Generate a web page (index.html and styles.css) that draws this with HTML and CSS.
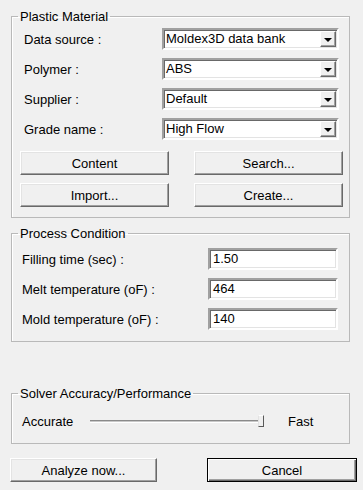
FILE: index.html
```html
<!DOCTYPE html>
<html lang="en">
<head>
    <meta charset="UTF-8">
    <title>Analysis Setup</title>
    <link rel="stylesheet" href="styles.css">
</head>
<body>

    <!-- Plastic material -->
    <fieldset class="group material">
        <legend>Plastic Material</legend>
        <div class="combo-rows">
            <span class="label">Data source :</span>
            <div class="combo"><span class="combo-text">Moldex3D data bank</span><span class="combo-btn"><span class="arrow"></span></span></div>
            <span class="label">Polymer :</span>
            <div class="combo"><span class="combo-text">ABS</span><span class="combo-btn"><span class="arrow"></span></span></div>
            <span class="label">Supplier :</span>
            <div class="combo"><span class="combo-text">Default</span><span class="combo-btn"><span class="arrow"></span></span></div>
            <span class="label">Grade name :</span>
            <div class="combo"><span class="combo-text">High Flow</span><span class="combo-btn"><span class="arrow"></span></span></div>
        </div>
        <div class="button-grid">
            <button class="win-btn">Content</button>
            <button class="win-btn">Search...</button>
            <button class="win-btn">Import...</button>
            <button class="win-btn">Create...</button>
        </div>
    </fieldset>

    <!-- Process condition -->
    <fieldset class="group process">
        <legend>Process Condition</legend>
        <div class="field-rows">
            <span class="label">Filling time (sec) :</span>
            <div class="textbox">1.50</div>
            <span class="label">Melt temperature (oF) :</span>
            <div class="textbox">464</div>
            <span class="label">Mold temperature (oF) :</span>
            <div class="textbox">140</div>
        </div>
    </fieldset>

    <!-- Solver -->
    <fieldset class="group solver">
        <legend>Solver Accuracy/Performance</legend>
        <div class="slider-row">
            <span class="slider-label">Accurate</span>
            <div class="slider">
                <div class="track"></div>
                <div class="thumb"></div>
            </div>
            <span class="slider-fast">Fast</span>
        </div>
    </fieldset>

    <div class="actions">
        <button class="win-btn analyze">Analyze now...</button>
        <button class="win-btn default">Cancel</button>
    </div>

</body>
</html>
```

FILE: styles.css
```css
body {
    margin: 0;
    padding: 9px 0 0 0;
    width: 363px;
    height: 490px;
    background-color: #f0f0f0;
    font-family: "Liberation Sans", Arial, sans-serif;
    font-size: 13px;
    color: #000;
    overflow: hidden;
}

/* Group boxes */
.group {
    margin: 0 13px 0 11px;
    padding: 0 0 10px 6px;
    border: 1px solid #b9b9b9;
    box-shadow: inset 1px 1px #fff;
    min-width: 0;
}

.group legend {
    padding: 0 2px;
    line-height: 15px;
}

.process {
    margin-top: 8px;
    padding-bottom: 11px;
}

.solver {
    margin-top: 44px;
    padding-bottom: 11px;
}

.label {
    display: flex;
    align-items: center;
    white-space: nowrap;
}

/* Combo boxes */
.combo-rows {
    display: grid;
    grid-template-columns: 1fr 177px;
    row-gap: 8px;
    margin-top: 4px;
    padding: 0 10px 0 6px;
}

.combo {
    display: flex;
    height: 22px;
    box-sizing: border-box;
    background: #fff;
    border: 2px solid;
    border-color: #a0a0a0 #fff #fff #a0a0a0;
    box-shadow: inset 1px 1px #696969, inset -1px -1px #e3e3e3;
    padding: 1px;
}

.combo-text {
    flex: 1;
    padding-left: 1px;
    line-height: 16px;
}

.combo-btn {
    width: 16px;
    height: 16px;
    box-sizing: border-box;
    background: #f0f0f0;
    border: 1px solid;
    border-color: #fff #696969 #696969 #fff;
    box-shadow: inset -1px -1px #a0a0a0;
    display: flex;
    align-items: center;
    justify-content: center;
}

.arrow {
    width: 0;
    height: 0;
    border-left: 4px solid transparent;
    border-right: 4px solid transparent;
    border-top: 4px solid #000;
    margin-top: 1px;
}

/* Buttons */
.button-grid {
    display: grid;
    grid-template-columns: 149px 149px;
    column-gap: 25px;
    row-gap: 8px;
    margin-top: 11px;
    padding-left: 2px;
}

.win-btn {
    height: 24px;
    box-sizing: border-box;
    background: #f0f0f0;
    font-family: "Liberation Sans", Arial, sans-serif;
    font-size: 13px;
    color: #000;
    border: 1px solid;
    border-color: #fff #696969 #696969 #fff;
    box-shadow: inset -1px -1px #a0a0a0, inset 1px 1px #e3e3e3;
    padding: 0;
}

/* Text fields */
.field-rows {
    display: grid;
    grid-template-columns: 1fr 130px;
    row-gap: 8px;
    margin-top: 7px;
    padding: 0 11px 0 4px;
}

.textbox {
    height: 22px;
    box-sizing: border-box;
    background: #fff;
    border: 2px solid;
    border-color: #a0a0a0 #fff #fff #a0a0a0;
    box-shadow: inset 1px 1px #696969, inset -1px -1px #e3e3e3;
    padding-left: 3px;
    line-height: 18px;
}

/* Slider */
.slider-row {
    display: flex;
    align-items: center;
    height: 22px;
    margin-top: 9px;
    padding-left: 4px;
}

.slider-label {
    width: 68px;
}

.slider {
    width: 174px;
    height: 14px;
    display: flex;
    align-items: center;
}

.track {
    flex: 1;
    height: 1px;
    border-top: 1px solid #8a8a8a;
    border-bottom: 1px solid #fff;
    background: #c8c8c8;
}

.thumb {
    width: 6px;
    height: 12px;
    box-sizing: border-box;
    background: #f0f0f0;
    border: 1px solid;
    border-color: #fff #5a5a5a #5a5a5a #e3e3e3;
}

.slider-fast {
    margin-left: 24px;
}

/* Bottom buttons */
.actions {
    display: flex;
    gap: 50px;
    margin-top: 14px;
    padding-left: 10px;
}

.analyze {
    width: 147px;
}

.default {
    width: 150px;
    border: 1px solid #000;
    box-shadow: inset 1px 1px #fff, inset -1px -1px #696969, inset -2px -2px #a0a0a0;
}
```
